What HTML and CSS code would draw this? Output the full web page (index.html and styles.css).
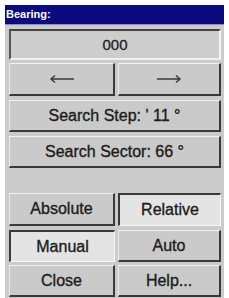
FILE: index.html
```html
<!DOCTYPE html>
<html lang="en">
<head>
    <meta charset="UTF-8">
    <title>Bearing</title>
    <link rel="stylesheet" href="styles.css">
</head>
<body>
    <div class="panel">
        <div class="title-bar">Bearing:</div>
        <div class="content">
            <div class="field">000</div>
            <div class="pair arrows">
                <button class="btn">
                    <svg width="26" height="12" viewBox="0 0 26 12"><path d="M25 6H2M6 2.5L2 6L6 9.5" fill="none" stroke="#3a3a3a" stroke-width="1.4"/></svg>
                </button>
                <button class="btn">
                    <svg width="26" height="12" viewBox="0 0 26 12"><path d="M1 6H24M20 2.5L24 6L20 9.5" fill="none" stroke="#3a3a3a" stroke-width="1.4"/></svg>
                </button>
            </div>
            <button class="btn wide step">Search Step: ' 11 °</button>
            <button class="btn wide sector">Search Sector: 66 °</button>
            <div class="pair mode">
                <button class="btn">Absolute</button>
                <button class="btn selected">Relative</button>
            </div>
            <div class="pair control">
                <button class="btn selected">Manual</button>
                <button class="btn">Auto</button>
            </div>
            <div class="pair footer">
                <button class="btn">Close</button>
                <button class="btn">Help...</button>
            </div>
        </div>
    </div>
</body>
</html>
```

FILE: styles.css
```css
body {
    margin: 0;
    background-color: white;
    font-family: "Liberation Sans", Arial, sans-serif;
}
.panel {
    margin: 5px 0 0 5px;
    width: 219px;
    height: 293px;
    background-color: #cbcbcb;
}
.title-bar {
    height: 19px;
    line-height: 19px;
    background-color: #0a0a7e;
    border-bottom: 1px solid #8a8ad0;
    color: white;
    font-size: 11px;
    font-weight: bold;
    padding-left: 1px;
}
.content {
    padding: 4px 3px 0 4px;
    display: flex;
    flex-direction: column;
}
.field {
    height: 27px;
    line-height: 27px;
    text-align: center;
    font-size: 15px;
    color: #222;
    -webkit-text-stroke: 0.3px #222;
    background-color: #cdcdcd;
    border-top: 2px solid #444;
    border-left: 2px solid #555;
    border-right: 2px solid #f4f4f4;
    border-bottom: 2px solid #f0f0f0;
}
.btn {
    box-sizing: border-box;
    height: 32px;
    padding: 0;
    font-family: "Liberation Sans", Arial, sans-serif;
    font-size: 16px;
    color: #1c1c1c;
    -webkit-text-stroke: 0.35px #1c1c1c;
    background-color: #cacaca;
    border-top: 1px solid #f2f2f2;
    border-left: 1px solid #ececec;
    border-right: 2px solid #3a3a3a;
    border-bottom: 2px solid #3a3a3a;
    display: flex;
    justify-content: center;
    align-items: center;
}
.btn.selected {
    background-color: #e4e4e4;
    border-top: 2px solid #3a3a3a;
    border-left: 2px solid #3a3a3a;
    border-right: 1px solid #f6f6f6;
    border-bottom: 1px solid #f6f6f6;
}
.pair {
    display: grid;
    grid-template-columns: 106px 1fr;
    column-gap: 3px;
}
.arrows {
    margin-top: 3px;
}
.arrows .btn {
    height: 33px;
}
.step {
    margin-top: 4px;
}
.sector {
    margin-top: 4px;
}
.mode {
    margin-top: 25px;
}
.mode .btn {
    height: 33px;
}
.control {
    margin-top: 4px;
}
.footer {
    margin-top: 3px;
}
```
